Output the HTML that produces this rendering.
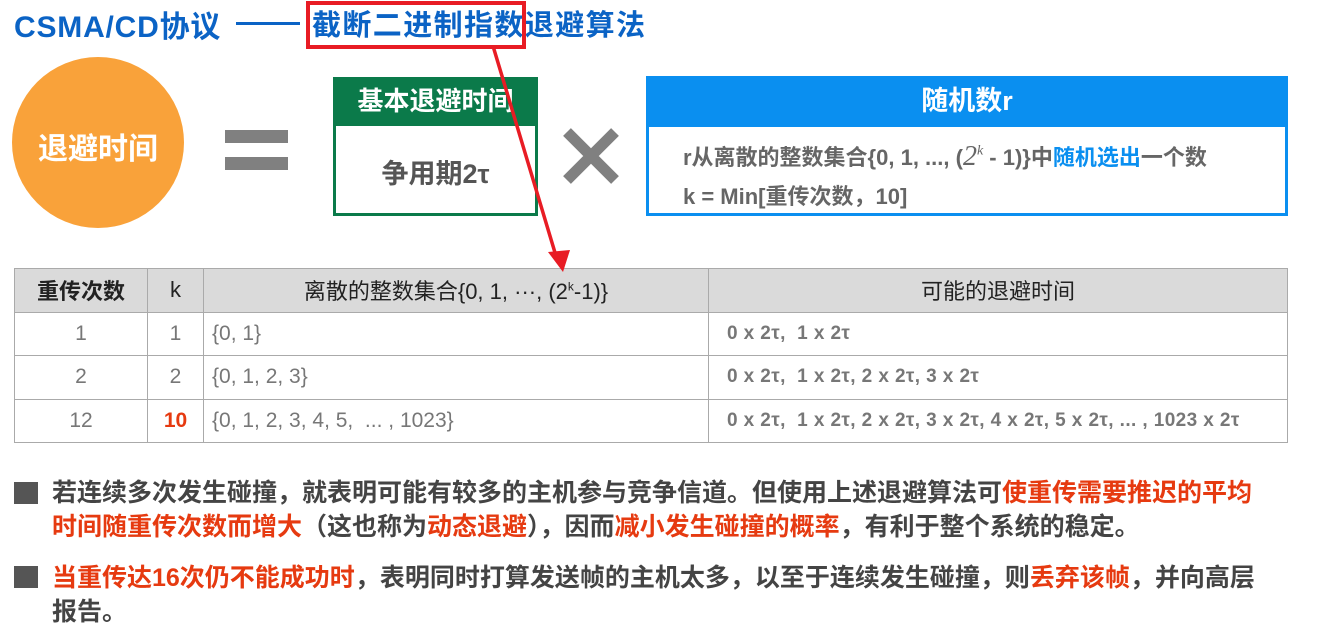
<!DOCTYPE html>
<html><head><meta charset="utf-8"><style>
*{margin:0;padding:0;box-sizing:border-box}
body{width:1317px;height:637px;background:#fff;position:relative;overflow:hidden;font-family:"Liberation Sans","Noto Sans CJK SC",sans-serif}
.a{position:absolute;white-space:nowrap}
.title{top:2px;font-size:29px;font-weight:bold;color:#0b63c5}
table{position:absolute;left:14px;top:268px;border-collapse:collapse;font-size:21px;color:#777}
td{border:1.5px solid #aaa;height:43.5px;padding:0 8px}
tr.h td{background:#dadada;color:#222;text-align:center;font-size:22px}
.c{text-align:center}
.rt{font-size:19px;font-weight:bold;padding-left:18px;letter-spacing:0.4px}
p.t{position:absolute;left:52px;font-size:25px;font-weight:bold;color:#444;line-height:34px;width:1215px}
.r{color:#e63a10}
.sq{position:absolute;left:14px;width:24px;height:22px;background:#555}
</style></head><body>
<div class="a title" style="left:14px;font-size:30px;letter-spacing:0.8px">CSMA/CD协议</div>
<div class="a" style="left:236px;top:22px;width:64px;height:3px;background:#0b63c5"></div>
<div class="a title" style="left:312px;letter-spacing:1.4px">截断二进制指数退避算法</div>
<div class="a" style="left:306px;top:1px;width:220px;height:48px;border:4px solid #e81c24"></div>

<div class="a" style="left:12px;top:57px;width:172px;height:171px;border-radius:50%;background:#f9a23a"></div>
<div class="a" style="left:12px;top:124px;width:172px;text-align:center;color:#fff;font-size:30px;font-weight:bold">退避时间</div>
<div class="a" style="left:225px;top:130px;width:63px;height:13px;background:#808080"></div>
<div class="a" style="left:225px;top:157px;width:63px;height:13px;background:#808080"></div>

<div class="a" style="left:333px;top:77px;width:205px;height:139px;border:3px solid #0b7a4a;background:#fff"></div>
<div class="a" style="left:333px;top:77px;width:205px;height:49px;background:#0b7a4a;color:#fff;font-size:26px;font-weight:bold;text-align:center;line-height:49px">基本退避时间</div>
<div class="a" style="left:333px;top:152px;width:205px;text-align:center;font-size:27px;font-weight:bold;color:#555">争用期2τ</div>

<svg class="a" style="left:560px;top:126px" width="62" height="60"><path d="M7 6L55 54M55 6L7 54" stroke="#808080" stroke-width="11"/></svg>

<div class="a" style="left:646px;top:76px;width:642px;height:140px;border:3px solid #0a8ff0;background:#fff"></div>
<div class="a" style="left:646px;top:76px;width:642px;height:51px;background:#0a8ff0;color:#fff;font-size:27px;font-weight:bold;text-align:center;line-height:51px">随机数r</div>
<div class="a" style="left:683px;top:140px;font-size:22px;font-weight:bold;color:#666">r从离散的整数集合{0, 1, ..., (<span style="font-family:'Liberation Serif',serif;font-weight:normal;font-style:italic;font-size:28px">2<sup style="font-size:14px">k</sup></span> - 1)}中<span style="color:#0a8ff0">随机选出</span>一个数</div>
<div class="a" style="left:683px;top:179px;font-size:22px;font-weight:bold;color:#666">k = Min[重传次数，10]</div>

<table>
<tr class="h"><td style="width:133px;font-weight:bold">重传次数</td><td style="width:56px">k</td><td style="width:505px">离散的整数集合{0, 1, ···, (2<sup style="font-size:12px">k</sup>-1)}</td><td style="width:579px">可能的退避时间</td></tr>
<tr><td class="c">1</td><td class="c">1</td><td>{0, 1}</td><td class="rt">0 x 2τ,&nbsp; 1 x 2τ</td></tr>
<tr><td class="c">2</td><td class="c">2</td><td>{0, 1, 2, 3}</td><td class="rt">0 x 2τ,&nbsp; 1 x 2τ, 2 x 2τ, 3 x 2τ</td></tr>
<tr><td class="c">12</td><td class="c" style="color:#e63a10;font-weight:bold">10</td><td>{0, 1, 2, 3, 4, 5, &nbsp;... , 1023}</td><td class="rt">0 x 2τ,&nbsp; 1 x 2τ, 2 x 2τ, 3 x 2τ, 4 x 2τ, 5 x 2τ, ... , 1023 x 2τ</td></tr>
</table>

<svg class="a" style="left:0;top:0" width="1317" height="637"><line x1="493" y1="46" x2="556" y2="256" stroke="#e81c24" stroke-width="3.5"/><path d="M548 252L570 250L563 272Z" fill="#e81c24"/></svg>

<div class="sq" style="top:482px"></div>
<p class="t" style="top:476px">若连续多次发生碰撞，就表明可能有较多的主机参与竞争信道。但使用上述退避算法可<span class="r">使重传需要推迟的平均时间随重传次数而增大</span>（这也称为<span class="r">动态退避</span>），因而<span class="r">减小发生碰撞的概率</span>，有利于整个系统的稳定。</p>
<div class="sq" style="top:566px"></div>
<p class="t" style="top:561px"><span class="r">当重传达16次仍不能成功时</span>，表明同时打算发送帧的主机太多，以至于连续发生碰撞，则<span class="r">丢弃该帧</span>，并向高层报告。</p>
</body></html>
